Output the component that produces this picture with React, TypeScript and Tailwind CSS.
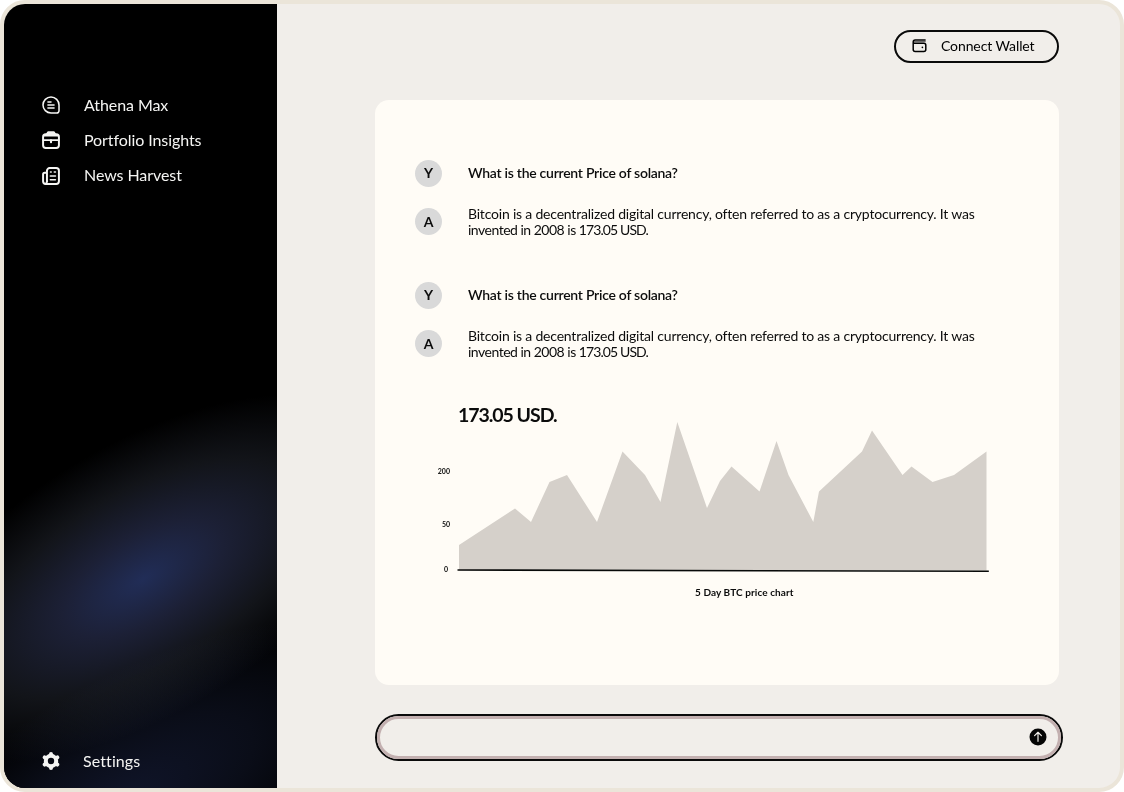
import React from "react";

type IconProps = { className?: string };

function ChatIcon({ className }: IconProps) {
  return (
    <svg viewBox="0 0 20 20" className={className} fill="none" stroke="currentColor" strokeWidth="1.700" strokeLinecap="round" strokeLinejoin="round">
      <path d="M10 1.100a8.900 8.900 0 1 0 0 17.800h6.500a2.400 2.400 0 0 0 2.400-2.400V10A8.900 8.900 0 0 0 10 1.100Z" />
      <path d="M6.600 6.600h3.400M6.600 10h6.800M6.600 13.400h6.800" />
    </svg>
  );
}

function BriefcaseIcon({ className }: IconProps) {
  return (
    <svg viewBox="0 0 20 20" className={className} fill="none" stroke="currentColor" strokeWidth="2.200" strokeLinecap="round" strokeLinejoin="round">
      <path d="M4.200 3.700h11.600a3 3 0 0 1 3 3v9a3.100 3.100 0 0 1-3 3.100H4.200a3.100 3.100 0 0 1-3-3.100v-9a3 3 0 0 1 3-3Z" />
      <path d="M5.500 3.300 7 1.300h6l1.500 2Z" fill="currentColor" />
      <path d="M2.500 5.200h15" strokeWidth="1.800" />
      <path d="M1.500 10.200h17" strokeWidth="1.900" />
      <path d="M10 10.500v1.900" strokeWidth="2.400" />
    </svg>
  );
}

function NewsIcon({ className }: IconProps) {
  return (
    <svg viewBox="0 0 20 20" className={className} fill="none" stroke="currentColor" strokeWidth="2.200" strokeLinecap="round" strokeLinejoin="round">
      <path d="M5.500 15.800V4.200a3 3 0 0 1 3-3h7.300a3 3 0 0 1 3 3v11.600a3 3 0 0 1-3 3H4.200a3 3 0 0 1-3-3V8.200a1.800 1.800 0 0 1 1.800-1.800h2.500" />
      <path d="M5.500 15.800c0 1.300-.5 2.400-1.500 3" />
      <path d="M9.500 5.600h.7M13.700 5.600h1.200M9.300 10h5.600M9.300 14.200h5.600" strokeWidth="1.800" />
    </svg>
  );
}

function GearIcon({ className }: IconProps) {
  return (
    <svg viewBox="0 0 18 18" className={className} fill="none" stroke="currentColor" strokeLinejoin="round" strokeLinecap="round">
      <circle cx="9" cy="9" r="5.200" strokeWidth="4" />
      <path d="M9 2v.8M9 16v-.8M2.700 5.400l.9.500M15.300 12.600l-.9-.5M2.700 12.600l.9-.5M15.300 5.400l-.9.500" strokeWidth="4" />
    </svg>
  );
}

function WalletIcon({ className }: IconProps) {
  return (
    <svg viewBox="0 0 15 14" className={className} fill="none" stroke="currentColor" strokeWidth="1.500" strokeLinecap="round" strokeLinejoin="round">
      <path d="M1.200 3.200v7.200a2 2 0 0 0 2 2h8.600a2 2 0 0 0 2-2V6.200a2 2 0 0 0-2-2H2.400a1.200 1.200 0 0 1-1.200-1.200c0-1.100.9-1.900 2-1.900h9.900" />
      <path d="M2.600 2.700h10.600" strokeWidth="1.300" opacity=".55" />
      <circle cx="10.400" cy="8.300" r=".85" fill="currentColor" stroke="none" />
    </svg>
  );
}

const nav = [
  { label: "Athena Max", Icon: ChatIcon, offset: "" },
  { label: "Portfolio Insights", Icon: BriefcaseIcon, offset: "" },
  { label: "News Harvest", Icon: NewsIcon, offset: "mt-[2px]" },
];

function Avatar({ letter }: { letter: string }) {
  return (
    <div className="flex size-[27px] shrink-0 items-center justify-center rounded-full bg-[#d9d9d9] text-[14px] font-bold leading-none">
      {letter}
    </div>
  );
}

function Exchange() {
  return (
    <div className="flex flex-col">
      <div className="flex h-[27px] items-center gap-[26px]">
        <Avatar letter="Y" />
        <p className="whitespace-nowrap pb-[1px] text-[14px] font-semibold tracking-[-0.27px]">What is the current Price of solana?</p>
      </div>
      <div className="mt-[19px] flex items-center gap-[26px]">
        <Avatar letter="A" />
        <p className="whitespace-nowrap text-[14px] leading-4 tracking-[-0.2px]">
          Bitcoin is a decentralized digital currency, often referred to as a cryptocurrency. It was
          <br />
          <span className="tracking-[-0.500px]">invented in 2008 is </span>
          <span className="tracking-[-0.900px]">173.05 USD.</span>
        </p>
      </div>
    </div>
  );
}

function PriceChart() {
  return (
    <div className="flex">
      <div className="flex w-[35px] flex-col items-end pt-[45px] text-[7px] font-bold leading-[8px]">
        <span>200</span>
        <span className="mt-[45px]">50</span>
        <span className="mt-[37px] pr-[2px]">0</span>
      </div>
      <svg viewBox="457 422 532 151" className="ml-[7px] h-[151px] w-[532px]">
        <path
          d="M459 545L515 508.500L531 522L549.500 482L567 475L597 522L622.500 451.500L645 475L660.500 502L677.300 422L707 508L720 481L731.500 466.500L759.500 491.500L776.500 441L788.500 475L813.300 522L819 491.500L862 451.500L872 430.500L902.500 475L911.500 466.500L932.500 482L954 475L986.500 451.500V570.500H459Z"
          fill="#d5d0ca"
        />
        <path d="M457.500 570L988.800 571.200" stroke="#080a09" strokeWidth="1.600" />
      </svg>
    </div>
  );
}

export default function App() {
  return (
    <div className="h-[792px] w-[1124px] bg-white font-['Lato',sans-serif] text-[#0c0c0c]">
      <div className="flex h-full w-full overflow-hidden rounded-[25px] border-4 border-[#ebe5d9] bg-[#f1eeea]">
        <aside className="relative flex w-[273px] shrink-0 flex-col justify-between overflow-hidden bg-black pt-[89px] pb-[10px] pl-[38px] text-[#f5f5f3]">
          <div className="pointer-events-none absolute top-[441px] left-[-141px] h-[268px] w-[560px] -rotate-[31deg] bg-[radial-gradient(closest-side,#212d57_0%,#1c2036_32%,#121419_65%,#000000_100%)]" />
          <div className="pointer-events-none absolute top-[680px] left-[-184px] h-[240px] w-[600px] -rotate-[30deg] bg-[radial-gradient(closest-side,#10152a_0%,#0a0d18_50%,transparent_100%)] mix-blend-screen" />
          <nav className="relative flex flex-col gap-[11px]">
            {nav.map(({ label, Icon, offset }) => (
              <a key={label} className="flex h-6 items-center gap-6">
                <span className={offset}>
                  <Icon className="size-[18px]" />
                </span>
                <span className="whitespace-nowrap text-[16px] tracking-[-0.08px]">{label}</span>
              </a>
            ))}
          </nav>
          <a className="relative flex h-[34px] items-center gap-[23px]">
            <GearIcon className="size-[18px]" />
            <span className="text-[16px] tracking-[0.1px]">Settings</span>
          </a>
        </aside>
        <main className="flex flex-1 flex-col pt-[25.500px] pl-[98px]">
          <div className="flex w-[684px] justify-end">
            <button className="flex h-[33px] w-[165px] items-center rounded-full border-2 border-[#0a0a0a] pb-[1px] pl-[16px] text-black">
              <WalletIcon className="h-[14px] w-[15px]" />
              <span className="ml-[14px] whitespace-nowrap text-[14px] tracking-[-0.1px]">Connect Wallet</span>
            </button>
          </div>
          <section className="mt-[37px] flex h-[585px] w-[684px] flex-col rounded-[14px] bg-[#fffcf6] pt-[60px] pl-[40px]">
            <Exchange />
            <div className="mt-[44px]">
              <Exchange />
            </div>
            <h2 className="mt-[44px] ml-[43px] h-[18px] whitespace-nowrap text-[19.500px] font-bold leading-[22px] tracking-[-1.050px]">173.05 USD.</h2>
            <PriceChart />
            <p className="mt-[11px] ml-[280px] whitespace-nowrap text-[10px] font-bold leading-[16px] tracking-[0.080px]">5 Day BTC price chart</p>
          </section>
          <form className="mt-[29px] flex h-[47px] w-[688px] rounded-full border-2 border-[#0a0a0a]" onSubmit={(e) => e.preventDefault()}>
            <div className="flex flex-1 items-center rounded-full border-[3px] border-[#c3b0b0] pr-[11px]">
              <input aria-label="Message" className="h-full min-w-0 flex-1 bg-transparent px-5 text-sm outline-none" />
              <button aria-label="Send">
                <svg viewBox="0 0 18 18" className="size-[18px]" fill="none" strokeLinecap="round" strokeLinejoin="round">
                  <circle cx="9" cy="9" r="8.500" fill="#050505" />
                  <path d="M9 13.300V4.500M5.600 7.600 9 4.300l3.400 3.300" stroke="#f1eeea" strokeWidth="1.200" />
                </svg>
              </button>
            </div>
          </form>
        </main>
      </div>
    </div>
  );
}
